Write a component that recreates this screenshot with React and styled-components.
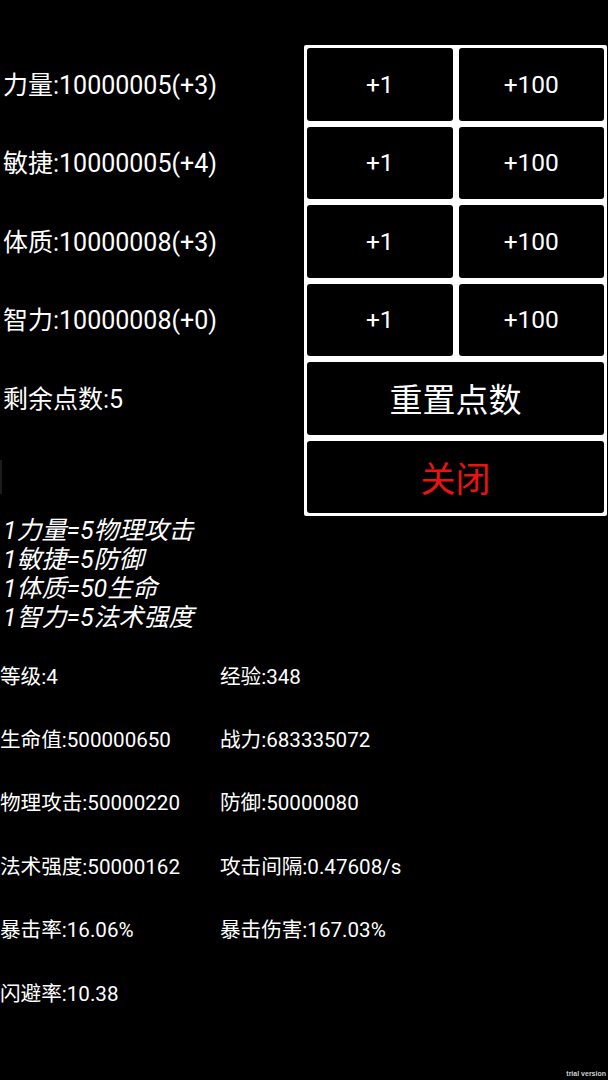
import React from "react";
import styled, { createGlobalStyle } from "styled-components";

const FONT = `Roboto, "Noto Sans CJK SC", sans-serif`;

const Global = createGlobalStyle`
  html, body { margin: 0; padding: 0; background: #000; }
  body { font-family: ${FONT}; color: #fff; }
  * { box-sizing: border-box; }
`;

const Page = styled.div`
  position: relative;
  width: 608px;
  height: 1080px;
  background: #000;
  overflow: hidden;
  padding-top: 45px;
`;

const Top = styled.div`
  display: flex;
`;

const AttrColumn = styled.div`
  width: 304px;
  padding: 3px 0 3px 3px;
  display: grid;
  grid-auto-rows: 72.5px;
  row-gap: 6px;
`;

const AttrRow = styled.div`
  display: flex;
  align-items: center;
  font-size: 25px;
  white-space: nowrap;
  margin-top: -3px;
`;

const EdgeMark = styled.div`
  width: 2px;
  height: 34px;
  margin-left: -3px;
  margin-top: 3px;
  background: #1c1c1c;
`;

const Panel = styled.div`
  width: 303px;
  background: #fff;
  padding: 3px;
  border-radius: 2px;
  display: grid;
  grid-template-columns: 1fr 1fr;
  grid-auto-rows: 72.5px;
  gap: 6px;
`;

const Btn = styled.button`
  grid-column: ${(p) => (p.$wide ? "1 / span 2" : "auto")};
  background: #000;
  border: none;
  border-radius: 3px;
  color: ${(p) => p.$color || "#fff"};
  font-family: ${FONT};
  font-size: ${(p) => p.$size || "24.5px"};
  padding: 0;
  display: flex;
  align-items: center;
  justify-content: center;
`;

const Formulas = styled.div`
  padding-left: 3px;
  font-size: 25px;
  line-height: 29px;
  font-style: italic;
`;

const Stats = styled.div`
  margin-top: 11px;
  display: grid;
  grid-template-columns: 220px 1fr;
  grid-auto-rows: 63.4px;
  font-size: 20.6px;
`;

const Stat = styled.div`
  display: flex;
  align-items: center;
  white-space: nowrap;
`;

const Watermark = styled.div`
  position: absolute;
  right: 2px;
  bottom: 3px;
  font-family: "Liberation Sans", sans-serif;
  font-size: 7px;
  font-weight: bold;
  color: #cfcfcf;
`;

const attrs = [
  "力量:10000005(+3)",
  "敏捷:10000005(+4)",
  "体质:10000008(+3)",
  "智力:10000008(+0)",
];

const formulas = ["1力量=5物理攻击", "1敏捷=5防御", "1体质=50生命", "1智力=5法术强度"];

const stats = [
  "等级:4",
  "经验:348",
  "生命值:500000650",
  "战力:683335072",
  "物理攻击:50000220",
  "防御:50000080",
  "法术强度:50000162",
  "攻击间隔:0.47608/s",
  "暴击率:16.06%",
  "暴击伤害:167.03%",
  "闪避率:10.38",
];

export default function App() {
  return (
    <Page>
      <Global />
      <Top>
        <AttrColumn>
          {attrs.map((a) => (
            <AttrRow key={a}>{a}</AttrRow>
          ))}
          <AttrRow>剩余点数:5</AttrRow>
          <AttrRow>
            <EdgeMark />
          </AttrRow>
        </AttrColumn>
        <Panel>
          {attrs.map((a) => (
            <React.Fragment key={a}>
              <Btn>+1</Btn>
              <Btn>+100</Btn>
            </React.Fragment>
          ))}
          <Btn $wide $size="33px">重置点数</Btn>
          <Btn $wide $size="35px" $color="#e81414">关闭</Btn>
        </Panel>
      </Top>
      <Formulas>
        {formulas.map((f) => (
          <div key={f}>{f}</div>
        ))}
      </Formulas>
      <Stats>
        {stats.map((s) => (
          <Stat key={s}>{s}</Stat>
        ))}
      </Stats>
      <Watermark>trial version</Watermark>
    </Page>
  );
}
